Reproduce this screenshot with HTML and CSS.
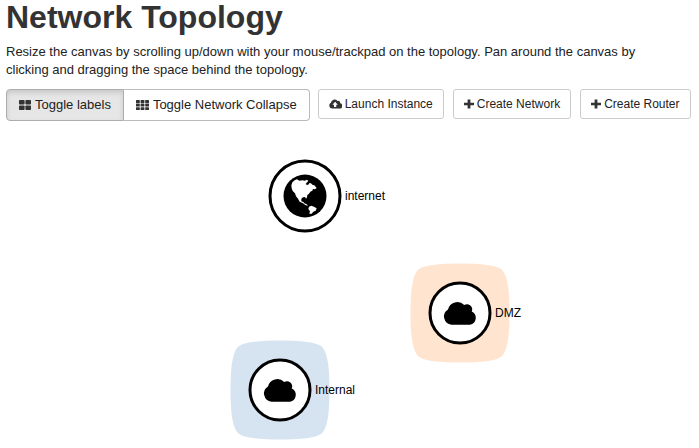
FILE: index.html
```html
<!DOCTYPE html>
<html lang="en">
<head>
<meta charset="utf-8">
<title>Network Topology</title>
<link rel="stylesheet" href="styles.css">
</head>
<body>
<main class="page">
  <h1 class="title">Network Topology</h1>
  <p class="help">Resize the canvas by scrolling up/down with your mouse/trackpad on the topology. Pan around the canvas by clicking and dragging the space behind the topology.</p>
  <div class="toolbar">
    <div class="group">
      <button type="button" class="btn btn-active" aria-pressed="true">
        <svg class="icon" viewBox="0 0 12 12" aria-hidden="true"><rect x="0" y="1" width="5.600" height="4.600" rx=".8"/><rect x="6.400" y="1" width="5.600" height="4.600" rx=".8"/><rect x="0" y="6.400" width="5.600" height="4.600" rx=".8"/><rect x="6.400" y="6.400" width="5.600" height="4.600" rx=".8"/></svg>
        Toggle labels
      </button>
      <button type="button" class="btn" aria-pressed="false">
        <svg class="icon icon-wide" viewBox="0 0 13 12" aria-hidden="true"><g id="row"><rect x="0" y="1" width="3.800" height="2.900" rx=".5"/><rect x="4.600" y="1" width="3.800" height="2.900" rx=".5"/><rect x="9.200" y="1" width="3.800" height="2.900" rx=".5"/></g><use href="#row" y="3.600"/><use href="#row" y="7.200"/></svg>
        Toggle Network Collapse
      </button>
    </div>
    <div class="actions">
      <button type="button" class="btn btn-small">
        <svg class="icon icon-wide" viewBox="-17 -14 34 28" aria-hidden="true"><path fill-rule="evenodd" d="M-9 12A8 8 0 0 1-12-3A9.500 9.500 0 0 1 5-8A5 5 0 0 1 12-2A7 7 0 0 1 10 12ZM-1-6L-8 2H-4V8H2V2H6Z"/></svg>
        Launch Instance
      </button>
      <button type="button" class="btn btn-small">
        <svg class="icon icon-plus" viewBox="0 0 10 12" aria-hidden="true"><path d="M3.600 1.500h2.800v3.200H10v2.600H6.400v3.200H3.600V7.300H0V4.700h3.600z"/></svg>
        Create Network
      </button>
      <button type="button" class="btn btn-small">
        <svg class="icon icon-plus" viewBox="0 0 10 12" aria-hidden="true"><path d="M3.600 1.500h2.800v3.200H10v2.600H6.400v3.200H3.600V7.300H0V4.700h3.600z"/></svg>
        Create Router
      </button>
    </div>
  </div>
  <svg class="canvas" role="img" aria-label="Network topology">
    <defs>
      <path id="hull" d="M0-49.500C20-49.500 37-48 42-43C48-37 49.500-20 49.500 0C49.500 20 48 37 42 43C37 48 20 49.500 0 49.500C-20 49.500-37 48-42 43C-48 37-49.500 20-49.500 0C-49.500-20-48-37-42-43C-37-48-20-49.500 0-49.500Z"/>
      <path id="cloud" d="M-8.500 11.700A8.200 8.200 0 0 1-12-3.500A9.600 9.600 0 0 1 4.200-8A5.300 5.300 0 0 1 11.800-1.500A7 7 0 0 1 10 11.700Z"/>
    </defs>
    <g transform="translate(299 63)">
      <circle class="ring" r="35"/>
      <circle r="21.500"/>
      <path class="land" transform="scale(.333) translate(-74 -74)" d="M33 42L36 33L43 27L50 24L57 28L66 27L73 28L80 25L84 29L79 34L76 38L80 41L86 39L87 35L92 36L96 40L102 42L109 50L104 54L98 53L96 58L90 61L86 67L81 71L80 78L77 82L74 77L68 78L63 82L63 90L69 92L72 96L79 99L83 104L75 101L68 96L58 91L53 82L47 75L44 66L37 59L34 51ZM86 106L93 103L101 106L109 111L106 118L99 121L94 127L87 127L89 120L84 113Z"/>
      <text class="label" x="40" y="4">internet</text>
    </g>
    <g transform="translate(454 180)">
      <use class="hull-orange" href="#hull"/>
      <circle class="ring" r="30"/>
      <use href="#cloud"/>
      <text class="label" x="35" y="4">DMZ</text>
    </g>
    <g transform="translate(274 257)">
      <use class="hull-blue" href="#hull"/>
      <circle class="ring" r="30"/>
      <use href="#cloud"/>
      <text class="label" x="35" y="4">Internal</text>
    </g>
  </svg>
</main>
</body>
</html>
```
FILE: styles.css
```css
* { box-sizing: border-box; }
body {
  margin: 0;
  background: #fff;
  color: #333;
  font-family: "Liberation Sans", Arial, sans-serif;
  font-size: 13px;
  line-height: 18px;
}
.page { padding: 0 6px; }
.title {
  margin: 0 0 9px;
  font-size: 32px;
  line-height: 34px;
  font-weight: bold;
}
.help { margin: 0 0 10px; max-width: 660px; color: #222; }
.toolbar { display: flex; align-items: flex-start; gap: 8px; }
.group { display: flex; }
.actions { display: flex; gap: 9px; }
.btn {
  display: flex;
  align-items: center;
  gap: 4px;
  height: 32px;
  padding: 0 12px;
  border: 1px solid #bbb;
  border-radius: 4px;
  background: #fff;
  color: #222;
  font: inherit;
  white-space: nowrap;
}
.group .btn:first-child { border-radius: 4px 0 0 4px; }
.group .btn:last-child { border-left: 0; border-radius: 0 4px 4px 0; }
.btn-active {
  border-color: #adadad;
  background: #e6e6e6;
  box-shadow: inset 0 3px 5px rgba(0, 0, 0, .125);
}
.btn-small { gap: 3px; height: 30px; padding: 0 10px; border-color: #ccc; border-radius: 3px; font-size: 12px; }
.icon { width: 12px; height: 12px; fill: #333; }
.icon-wide { width: 13px; }
.icon-plus { width: 10px; }
.canvas { display: block; width: 100%; height: 315px; margin-top: 12px; overflow: visible; }
.ring { fill: #fff; stroke: #000; stroke-width: 3px; }
.land { fill: #fff; }
.hull-orange { fill: #ffe5d0; }
.hull-blue { fill: #d6e3f1; }
.label { fill: #000; font-size: 12px; }
```
